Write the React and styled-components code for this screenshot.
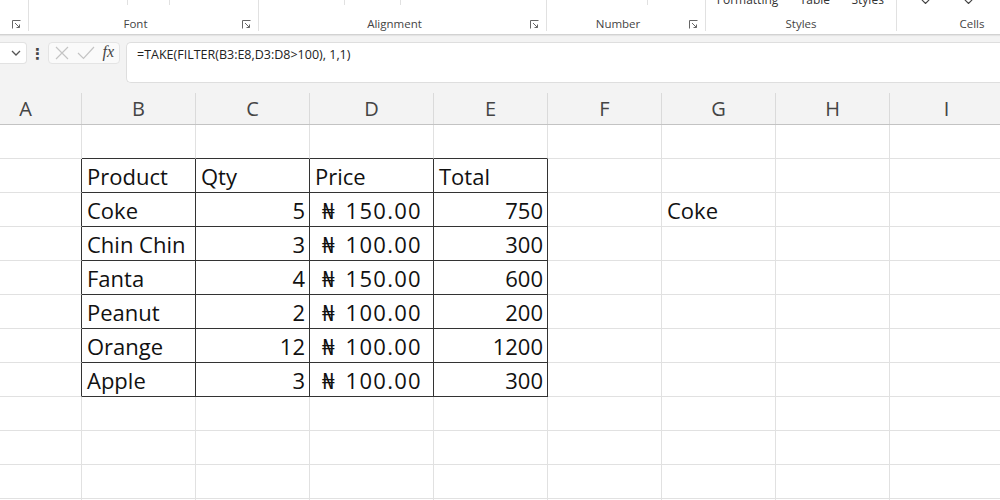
import React from 'react'
import styled, { createGlobalStyle } from 'styled-components'

const GlobalStyle = createGlobalStyle`
    html, body {
        margin: 0;
        padding: 0;
        background: #ffffff;
        overflow: hidden;
    }
    * {
        box-sizing: border-box;
    }
`

const UI_FONT = `"Open Sans", "Noto Sans", "DejaVu Sans", sans-serif`
const CELL_FONT = `"Open Sans", "Noto Sans", "DejaVu Sans", sans-serif`

// column A is partly scrolled off to the left, so its letter sits left of centre
const columns = [
    { key: 'A', width: 82, hidden: 30 },
    { key: 'B', width: 114 },
    { key: 'C', width: 114 },
    { key: 'D', width: 124 },
    { key: 'E', width: 114 },
    { key: 'F', width: 114 },
    { key: 'G', width: 114 },
    { key: 'H', width: 114 },
    { key: 'I', width: 114 },
]

const products = [
    ['Coke', 5, '150.00', 750],
    ['Chin Chin', 3, '100.00', 300],
    ['Fanta', 4, '150.00', 600],
    ['Peanut', 2, '100.00', 200],
    ['Orange', 12, '100.00', 1200],
    ['Apple', 3, '100.00', 300],
]

const ROW_COUNT = 12

const ribbonGroups = [
    { label: '', width: 29, launcher: true },
    { label: 'Font', width: 230, launcher: true, ticks: [98, 41] },
    { label: 'Alignment', width: 288, launcher: true, ticks: [85, 55] },
    { label: 'Number', width: 159, launcher: true, ticks: [100] },
    { label: 'Styles', width: 191, launcher: false, top: ['Formatting', 'Table', 'Styles'] },
    { label: 'Cells', width: 150, launcher: false, chevrons: true },
]

function Launcher() {
    return (
        <svg width="9" height="9" viewBox="0 0 9 9">
            <path d="M0.5 8.5 V0.5 H8.5" fill="none" stroke="#666" strokeWidth="1" />
            <path d="M3 3 L7.5 7.5 M4.5 7.5 H7.5 V4.5" fill="none" stroke="#666" strokeWidth="1" />
        </svg>
    )
}

function Chevron({ color = '#555', size = 10 }) {
    return (
        <svg width={size} height={size * 0.6} viewBox="0 0 10 6">
            <path d="M1 1 L5 5 L9 1" fill="none" stroke={color} strokeWidth="1.3" />
        </svg>
    )
}

function Ribbon() {
    return (
        <RibbonBar>
            {ribbonGroups.map((g, i) => (
                <RibbonGroup key={i} width={g.width}>
                    <GroupTop spread={!!g.top}>
                        {g.ticks && g.ticks.map((t, ti) => <Tick key={ti} offset={t} />)}
                        {g.top && g.top.map(t => (
                            <TopLabel key={t}>{t} <small>˅</small></TopLabel>
                        ))}
                        {g.chevrons && (
                            <>
                                <TopChevron offset={24}><Chevron color="#444" size={9} /></TopChevron>
                                <TopChevron offset={34}><Chevron color="#444" size={9} /></TopChevron>
                            </>
                        )}
                    </GroupTop>
                    <GroupFooter>
                        <GroupLabel>{g.label}</GroupLabel>
                        {g.launcher && <LauncherSlot><Launcher /></LauncherSlot>}
                    </GroupFooter>
                </RibbonGroup>
            ))}
        </RibbonBar>
    )
}

function FormulaBar() {
    return (
        <FormulaRow>
            <NameBox>
                <Chevron color="#555" size={10} />
            </NameBox>
            <Dots>⋮</Dots>
            <ActionBox>
                <svg width="14" height="14" viewBox="0 0 14 14">
                    <path d="M1 1 L13 13 M13 1 L1 13" stroke="#c4c4c4" strokeWidth="1.2" />
                </svg>
                <svg width="18" height="14" viewBox="0 0 18 14">
                    <path d="M1 7 L6.5 12.5 L17 1" fill="none" stroke="#c4c4c4" strokeWidth="1.2" />
                </svg>
                <FxLabel>fx</FxLabel>
            </ActionBox>
            <FormulaInput>=TAKE(FILTER(B3:E8,D3:D8&gt;100), 1,1)</FormulaInput>
        </FormulaRow>
    )
}

function cellContent(row, col) {
    const g = row - 2
    if (row === 1) {
        return ['', 'Product', 'Qty', 'Price', 'Total'][col] || ''
    }
    if (g >= 0 && g < products.length) {
        const p = products[g]
        if (col === 1) return p[0]
        if (col === 2) return p[1]
        if (col === 3) return { currency: '₦', amount: p[2] }
        if (col === 4) return p[3]
    }
    if (row === 2 && col === 6) return 'Coke'
    return ''
}

function Sheet() {
    const cells = []
    for (let r = 0; r < ROW_COUNT; r++) {
        columns.forEach((c, ci) => {
            const inTable = r >= 1 && r <= 7 && ci >= 1 && ci <= 4
            const leftOfTable = r >= 1 && r <= 7 && ci === 0
            const aboveTable = r === 0 && ci >= 1 && ci <= 4
            const value = cellContent(r, ci)
            const numeric = typeof value === 'number'
            cells.push(
                <Cell
                    key={`${r}-${c.key}`}
                    darkRight={inTable || leftOfTable}
                    darkBottom={inTable || aboveTable}
                    align={numeric ? 'right' : 'left'}
                >
                    {value && value.currency ? (
                        <Accounting>
                            <span>{value.currency}</span>
                            <Amount>{value.amount}</Amount>
                        </Accounting>
                    ) : value}
                </Cell>
            )
        })
    }
    return <Grid>{cells}</Grid>
}

export default function App() {
    return (
        <>
            <GlobalStyle />
            <Window>
                <Ribbon />
                <FormulaBar />
                <HeaderRow>
                    {columns.map(c => (
                        <HeaderCell key={c.key} width={c.width} hidden={c.hidden || 0}>{c.key}</HeaderCell>
                    ))}
                </HeaderRow>
                <Sheet />
            </Window>
        </>
    )
}

const Window = styled.div`
    width: 1000px;
    height: 500px;
    overflow: hidden;
    background: #ffffff;
    font-family: ${UI_FONT};
`

const RibbonBar = styled.div`
    display: flex;
    height: 35px;
    background: #ffffff;
    border-bottom: 1px solid #d2d2d2;
    box-shadow: 0 1px 1px rgba(0, 0, 0, 0.06);
    position: relative;
    z-index: 1;
`

const RibbonGroup = styled.div`
    flex: 0 0 ${({ width }) => width}px;
    display: flex;
    flex-direction: column;
    justify-content: space-between;
    padding: 0 0 1px;
    margin: 0 0 3px;
    border-right: 1px solid #e1e1e1;
    &:last-child {
        border-right: 0;
    }
`

const GroupTop = styled.div`
    display: flex;
    justify-content: ${({ spread }) => (spread ? 'center' : 'flex-start')};
    align-items: flex-start;
    gap: ${({ spread }) => (spread ? '16px' : '0')};
    height: 10px;
    padding-left: ${({ spread }) => (spread ? '4px' : '0')};
`

const Tick = styled.span`
    width: 1px;
    height: 5px;
    margin-left: ${({ offset }) => offset}px;
    background: #e1e1e1;
`

const TopLabel = styled.span`
    margin-top: -9px;
    font-size: 12px;
    color: #333;
    white-space: nowrap;
    small {
        font-size: 8px;
        color: #777;
    }
`

const TopChevron = styled.span`
    margin: -2px 0 0 ${({ offset }) => offset}px;
    line-height: 0;
`

const GroupFooter = styled.div`
    display: flex;
    align-items: center;
    height: 14px;
`

const GroupLabel = styled.div`
    flex: 1;
    text-align: center;
    font-size: 11.5px;
    color: #444;
`

const LauncherSlot = styled.div`
    flex: 0 0 16px;
    display: flex;
    align-items: center;
    justify-content: flex-start;
    padding-top: 2px;
`

const FormulaRow = styled.div`
    display: flex;
    align-items: flex-start;
    height: 57px;
    padding-top: 7px;
    background: #f3f3f3;
`

const NameBox = styled.div`
    width: 27px;
    height: 22px;
    background: #ffffff;
    border: 1px solid #e2e2e2;
    border-left: 0;
    border-radius: 0 4px 4px 0;
    display: flex;
    align-items: center;
    justify-content: flex-end;
    padding-right: 5px;
`

const Dots = styled.div`
    width: 21px;
    height: 22px;
    display: flex;
    align-items: center;
    justify-content: center;
    font-size: 15px;
    font-weight: 700;
    color: #444;
`

const ActionBox = styled.div`
    width: 72px;
    height: 22px;
    background: #fafafa;
    border: 1px solid #e4e4e4;
    border-radius: 4px;
    display: flex;
    align-items: center;
    justify-content: space-between;
    padding: 0 5px 0 6px;
`

const FxLabel = styled.span`
    font-family: "Liberation Serif", "DejaVu Serif", serif;
    font-style: italic;
    font-size: 16px;
    color: #444;
    line-height: 1;
    margin-top: -2px;
`

const FormulaInput = styled.div`
    flex: 1;
    margin-left: 6px;
    height: 41px;
    background: #ffffff;
    border: 1px solid #dedede;
    border-right: 0;
    border-radius: 5px 0 0 5px;
    padding: 3px 0 0 10px;
    font-size: 12.5px;
    color: #222;
    white-space: nowrap;
`

const HeaderRow = styled.div`
    display: flex;
    height: 33px;
    background: #f3f3f3;
    border-bottom: 1px solid #c3c3c3;
`

const HeaderCell = styled.div`
    flex: 0 0 ${({ width }) => width}px;
    display: flex;
    align-items: center;
    justify-content: center;
    padding-right: ${({ hidden }) => hidden}px;
    border-right: 1px solid #dadada;
    font-size: 20px;
    color: #444;
    margin-top: 1px;
`

const Grid = styled.div`
    display: grid;
    grid-template-columns: ${columns.map(c => `${c.width}px`).join(' ')};
    grid-auto-rows: 34px;
`

const Cell = styled.div`
    display: flex;
    align-items: center;
    justify-content: ${({ align }) => (align === 'right' ? 'flex-end' : 'flex-start')};
    padding: 1px 4px 0 5px;
    border-right: 1px solid ${({ darkRight }) => (darkRight ? '#333' : '#e1e1e1')};
    border-bottom: 1px solid ${({ darkBottom }) => (darkBottom ? '#333' : '#e1e1e1')};
    font-family: ${CELL_FONT};
    font-size: 22px;
    color: #111;
    white-space: nowrap;
`

const Accounting = styled.div`
    flex: 1;
    display: flex;
    justify-content: space-between;
    padding: 0 8px 0 7px;
`

const Amount = styled.span`
    letter-spacing: 1.3px;
    margin-right: -1px;
`
